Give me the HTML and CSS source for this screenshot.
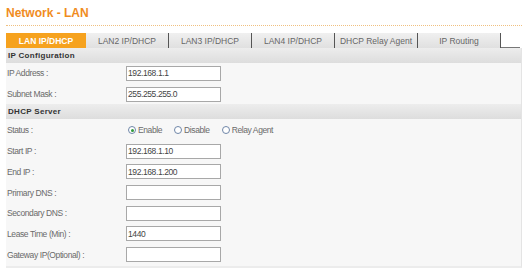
FILE: index.html
```html
<html>
  <head>
    <title>Network - LAN</title>
    <link rel="stylesheet" href="styles.css">
  </head>
  <body>
    <h1 class="title">Network - LAN</h1>
    <ul class="tabs">
      <li class="tab active">LAN IP/DHCP</li>
      <li class="tab">LAN2 IP/DHCP</li>
      <li class="tab">LAN3 IP/DHCP</li>
      <li class="tab">LAN4 IP/DHCP</li>
      <li class="tab">DHCP Relay Agent</li>
      <li class="tab">IP Routing</li>
      <li class="tab-rest"></li>
    </ul>
    <section class="panel">
      <div class="section">IP Configuration</div>
      <div class="row">
        <span class="label">IP Address :</span>
        <input class="field" type="text" value="192.168.1.1">
      </div>
      <div class="row">
        <span class="label">Subnet Mask :</span>
        <input class="field" type="text" value="255.255.255.0">
      </div>
      <div class="section">DHCP Server</div>
      <div class="row status">
        <span class="label">Status :</span>
        <span class="radios">
          <label class="radio"><span class="dot on"></span>Enable</label>
          <label class="radio"><span class="dot"></span>Disable</label>
          <label class="radio"><span class="dot"></span>Relay Agent</label>
        </span>
      </div>
      <div class="row">
        <span class="label">Start IP :</span>
        <input class="field" type="text" value="192.168.1.10">
      </div>
      <div class="row">
        <span class="label">End IP :</span>
        <input class="field" type="text" value="192.168.1.200">
      </div>
      <div class="row">
        <span class="label">Primary DNS :</span>
        <input class="field" type="text" value="">
      </div>
      <div class="row">
        <span class="label">Secondary DNS :</span>
        <input class="field" type="text" value="">
      </div>
      <div class="row">
        <span class="label">Lease Time (Min) :</span>
        <input class="field" type="text" value="1440">
      </div>
      <div class="row">
        <span class="label">Gateway IP(Optional) :</span>
        <input class="field" type="text" value="">
      </div>
    </section>
  </body>
</html>
```

FILE: styles.css
```css
body { margin: 0; padding: 4px 2px 0 6px; background: #fff; font-family: "Liberation Sans", Arial, sans-serif; font-size: 8.5px; letter-spacing: -0.4px; color: #6a6a6a; }
.title {
  margin: 0;
  padding: 2px 0 5px 0;
  font-size: 12px;
  font-weight: bold;
  letter-spacing: 0;
  color: #f08c1e;
  border-bottom: 1px dotted #f0c080;
}
.tabs {
  list-style: none;
  margin: 7px 0 0 0;
  padding: 0;
  display: flex;
  height: 15px;
}
.tab {
  display: flex;
  align-items: center;
  justify-content: center;
  width: 82px;
  background: linear-gradient(#f0f0f0, #e0e0e0);
  border-right: 1px solid #555;
  color: #666;
  font-size: 8.5px;
  letter-spacing: 0;
}
.tab.active {
  width: 80px;
  background: #f6a21e;
  color: #fff;
  font-weight: bold;
  border-right: none;
}
.tab-rest {
  flex: 1;
  margin-right: 2px;
  border-bottom: 1px solid #777;
}
.panel {
  background: #f7f7f7;
  border-right: 1px solid #e4e4e4;
  border-bottom: 2px solid #ececec;
  padding-bottom: 1px;
}
.section {
  height: 15px;
  line-height: 15px;
  padding-left: 2px;
  background: linear-gradient(#ededed, #dddddd);
  color: #333;
  font-weight: bold;
  font-size: 8px;
  letter-spacing: 0.3px;
}
.row {
  display: flex;
  align-items: center;
  height: 20.7px;
}
.label {
  width: 119px;
  padding-left: 1px;
}
.field {
  width: 95px;
  height: 15px;
  box-sizing: border-box;
  margin: 0;
  padding: 0 1px;
  border: 1px solid #a8a8a8;
  background: #fff;
  font-family: "Liberation Sans", Arial, sans-serif;
  font-size: 8.5px;
  letter-spacing: -0.4px;
  color: #444;
}
.status { height: 21.5px; }
.radios {
  display: flex;
  gap: 12px;
  padding-left: 2px;
}
.radio {
  display: flex;
  align-items: center;
  gap: 2px;
}
.dot {
  width: 6px;
  height: 6px;
  border: 1px solid #6f86a8;
  border-radius: 50%;
  background: #fff;
  position: relative;
}
.dot.on::after {
  content: "";
  position: absolute;
  left: 1.5px;
  top: 1.5px;
  width: 3px;
  height: 3px;
  border-radius: 50%;
  background: #2f9a3a;
}
```
